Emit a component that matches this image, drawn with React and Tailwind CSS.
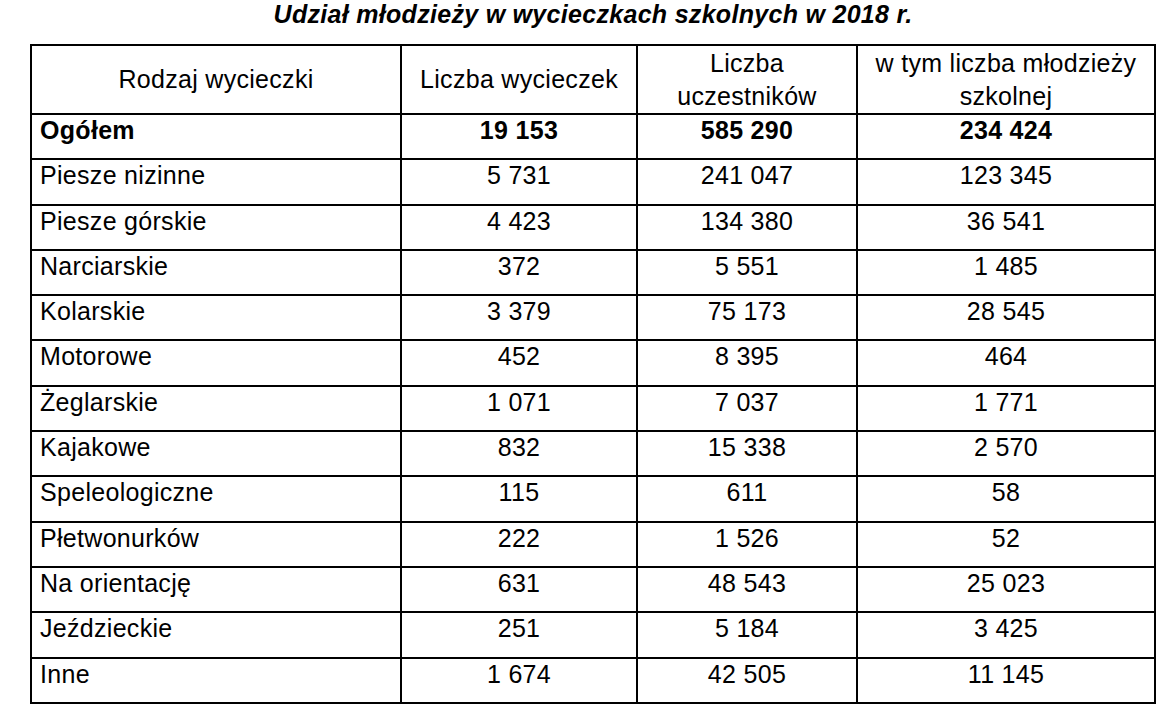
// Youth participation in school trips, 2018 — statistics table

import React from 'react';

const rows = [
  { name: 'Piesze nizinne', trips: '5 731', participants: '241 047', youth: '123 345' },
  { name: 'Piesze górskie', trips: '4 423', participants: '134 380', youth: '36 541' },
  { name: 'Narciarskie', trips: '372', participants: '5 551', youth: '1 485' },
  { name: 'Kolarskie', trips: '3 379', participants: '75 173', youth: '28 545' },
  { name: 'Motorowe', trips: '452', participants: '8 395', youth: '464' },
  { name: 'Żeglarskie', trips: '1 071', participants: '7 037', youth: '1 771' },
  { name: 'Kajakowe', trips: '832', participants: '15 338', youth: '2 570' },
  { name: 'Speleologiczne', trips: '115', participants: '611', youth: '58' },
  { name: 'Płetwonurków', trips: '222', participants: '1 526', youth: '52' },
  { name: 'Na orientację', trips: '631', participants: '48 543', youth: '25 023' },
  { name: 'Jeździeckie', trips: '251', participants: '5 184', youth: '3 425' },
  { name: 'Inne', trips: '1 674', participants: '42 505', youth: '11 145' },
];

const total = { name: 'Ogółem', trips: '19 153', participants: '585 290', youth: '234 424' };

function HeadCell({ children }) {
  return (
    <div className="flex h-[69px] items-center justify-center border-r-2 border-b-2 border-black text-center leading-[33px]">
      <div>{children}</div>
    </div>
  );
}

function Row({ row, bold }) {
  const weight = bold ? 'font-bold' : '';
  const cell = `h-[45.3px] border-r-2 border-b-2 border-black pt-px leading-[28.75px] ${weight}`;

  return (
    <>
      <div className={`${cell} pl-2`}>{row.name}</div>
      <div className={`${cell} text-center`}>{row.trips}</div>
      <div className={`${cell} text-center`}>{row.participants}</div>
      <div className={`${cell} text-center`}>{row.youth}</div>
    </>
  );
}

export default function App() {
  return (
    <div className="min-h-screen bg-white text-black font-['Liberation_Sans',Arial,sans-serif] text-[25px] tracking-[0.3px]">
      <h1 className="h-[44px] w-[1186px] text-center font-bold italic leading-[28.75px]">
        Udział młodzieży w wycieczkach szkolnych w 2018 r.
      </h1>

      <div className="ml-[30px] grid w-[1126px] grid-cols-[370px_236px_220px_298px] border-t-2 border-l-2 border-black">
        <HeadCell>Rodzaj wycieczki</HeadCell>
        <HeadCell>Liczba wycieczek</HeadCell>
        <HeadCell>
          Liczba
          <br />
          uczestników
        </HeadCell>
        <HeadCell>
          w tym liczba młodzieży
          <br />
          szkolnej
        </HeadCell>

        <Row row={total} bold />
        {rows.map((row) => (
          <Row key={row.name} row={row} />
        ))}
      </div>
    </div>
  );
}
